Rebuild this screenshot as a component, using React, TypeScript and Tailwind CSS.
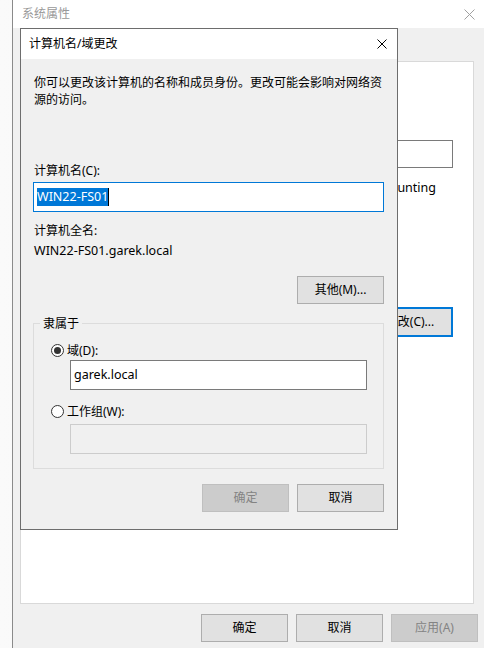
import React from "react";

function CloseIcon({ size, color }: { size: number; color: string }) {
  return (
    <svg width={size} height={size} viewBox={`0 0 ${size} ${size}`} fill="none">
      <path d={`M0.5 0.5 L${size - 0.5} ${size - 0.5} M${size - 0.5} 0.5 L0.5 ${size - 0.5}`} stroke={color} strokeWidth="1" />
    </svg>
  );
}

function WinButton({
  label,
  disabled,
  focused,
  className = "",
}: {
  label: string;
  disabled?: boolean;
  focused?: boolean;
  className?: string;
}) {
  if (disabled) {
    return (
      <div className={`flex items-center justify-center border border-[#bfbfbf] bg-[#cccccc] text-[#838383] ${className}`}>
        {label}
      </div>
    );
  }
  if (focused) {
    return (
      <div className={`flex items-center justify-center border-2 border-[#0078d7] bg-[#e1e1e1] text-black ${className}`}>
        {label}
      </div>
    );
  }
  return (
    <div className={`flex items-center justify-center border border-[#adadad] bg-[#e1e1e1] text-black ${className}`}>
      {label}
    </div>
  );
}

function Radio({ checked }: { checked?: boolean }) {
  return (
    <div className="w-[13px] h-[13px] rounded-full border border-[#333333] bg-white flex items-center justify-center shrink-0">
      {checked && <div className="w-[7px] h-[7px] rounded-full bg-[#333333]" />}
    </div>
  );
}

function ChangeDialog() {
  return (
    <div className="absolute left-[20px] top-[28px] w-[378px] h-[502px] border border-[#6d6d6d] bg-[#f0f0f0] flex flex-col">
      {/* title bar */}
      <div className="h-[30px] bg-white flex items-center justify-between pl-[8px] pr-[10px]">
        <span className="text-[12px] text-black">计算机名/域更改</span>
        <CloseIcon size={10} color="#000000" />
      </div>

      <div className="flex flex-col pl-[12px] pr-[13px] pt-[15px]">
        <p className="pl-[1px] leading-[17px]">
          你可以更改该计算机的名称和成员身份。更改可能会影响对网络资
          <br />
          源的访问。
        </p>

        <label className="mt-[54px] pl-[1px] leading-[17px]">计算机名(C):</label>
        <div className="mt-[3px] h-[30px] border border-[#0078d7] bg-white flex items-center pl-[3px]">
          <span className="bg-[#0078d7] text-white text-[12.5px] leading-[18px] h-[18px]">WIN22-FS01</span>
          <span className="w-[1px] h-[18px] bg-black" />
        </div>

        <p className="mt-[10px] pl-[1px] leading-[17px]">计算机全名:</p>
        <p className="mt-[3px] pl-[1px] text-[12.5px] leading-[17px]">WIN22-FS01.garek.local</p>

        <div className="mt-[17px] flex justify-end">
          <WinButton label="其他(M)..." className="w-[87px] h-[28px]" />
        </div>

        {/* group box */}
        <div className="relative mt-[19px] h-[146px] border border-[#dcdcdc] flex flex-col pt-[18px] pl-[17px]">
          <span className="absolute left-[6px] top-[-9px] px-[3px] bg-[#f0f0f0] leading-[17px]">隶属于</span>

          <div className="flex items-center gap-[3px] h-[17px]">
            <Radio checked />
            <span className="leading-[17px]">域(D):</span>
          </div>
          <div className="mt-[1px] ml-[19px] w-[297px] h-[30px] border border-[#7a7a7a] bg-white flex items-center pl-[3px] text-[12.5px]">
            garek.local
          </div>

          <div className="mt-[13px] flex items-center gap-[3px] h-[17px]">
            <Radio />
            <span className="leading-[17px]">工作组(W):</span>
          </div>
          <div className="mt-[4px] ml-[19px] w-[297px] h-[30px] border border-[#cccccc] bg-[#f0f0f0]" />
        </div>

        <div className="mt-[15px] flex justify-end gap-[8px]">
          <WinButton label="确定" disabled className="w-[87px] h-[28px]" />
          <WinButton label="取消" className="w-[87px] h-[28px]" />
        </div>
      </div>
    </div>
  );
}

export default function App() {
  return (
    <div className="relative w-[484px] h-[648px] overflow-hidden flex bg-gradient-to-r from-[#fafafa] to-[#f2f2f2] font-['Noto_Sans','Noto_Sans_CJK_SC',sans-serif] text-[12px] text-black">
      <div className="w-[12px] shrink-0" />

      {/* system properties window */}
      <div className="flex-1 flex flex-col border-l border-[#8a8a8a]">
        <div className="h-[28px] bg-white flex items-center justify-between pl-[9px] pr-[10px] shrink-0">
          <span className="text-[#999999] text-[12px]">系统属性</span>
          <CloseIcon size={11} color="#a0a0a0" />
        </div>

        <div className="flex-1 bg-[#f0f0f0] flex flex-col px-[7px] pt-[33px]">
          <div className="w-[454px] h-[543px] bg-white border border-[#d9d9d9] flex flex-col items-end pr-[20px] pt-[78px]">
            <div className="w-[330px] h-[28px] border border-[#7a7a7a] bg-white" />
            <p className="mt-[11px] pr-[17px] leading-[17px] whitespace-nowrap text-[12.5px]">例如: "IIS Production Server" 或 "Accounting</p>
            <WinButton label="更改(C)..." focused className="mt-[111px] w-[86px] h-[30px]" />
          </div>

          <div className="mt-[10px] ml-[181px] flex gap-[8px]">
            <WinButton label="确定" className="w-[87px] h-[28px]" />
            <WinButton label="取消" className="w-[87px] h-[28px]" />
            <WinButton label="应用(A)" disabled className="w-[87px] h-[28px]" />
          </div>
        </div>
      </div>

      <ChangeDialog />
    </div>
  );
}
